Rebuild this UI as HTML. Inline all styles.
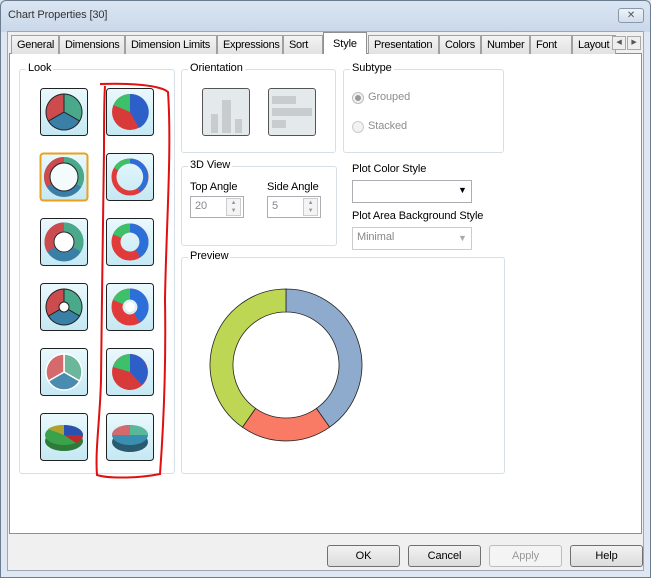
<!DOCTYPE html>
<html><head><style>
*{box-sizing:border-box}
body{margin:0;width:651px;height:578px;overflow:hidden;font-family:"Liberation Sans",sans-serif;font-size:11px;letter-spacing:-0.1px;color:#000;background:#dfe8f2;position:relative}
.a{position:absolute}
.title{left:0;top:0;width:651px;height:32px;background:linear-gradient(#dbe6f3,#c9d8ea);}
.frame{left:0;top:0;width:651px;height:578px;border:1px solid #6d7d90;border-radius:6px 6px 0 0}
.body{left:7px;top:31px;width:637px;height:540px;background:#f0f0f0;border:1px solid #9aa8b8}
.tab{top:35px;height:19px;border:1px solid #a0a0a0;border-bottom:none;background:linear-gradient(#f4f4f4,#e2e2e2);padding:3px 0 0 5px;font-size:11px;letter-spacing:-0.3px;white-space:nowrap;overflow:hidden}
.page{left:9px;top:53px;width:633px;height:481px;background:#fff;border:1px solid #8e8f8f}
.grp{border:1px solid #d5dfe5;border-radius:3px}
.lg{background:#fff;padding:0 2px}
.btn{top:545px;height:22px;border:1px solid #707070;border-radius:3px;background:linear-gradient(#f2f2f2,#dcdcdc);text-align:center;padding-top:4px}
.in{border:1px solid #abadb3;background:#fff;color:#888;padding:3px 0 0 4px}
.gray{color:#8d8d8d}
</style></head><body>
<div class="a title"></div>
<div class="a" style="left:8px;top:9px;color:#333">Chart Properties [30]</div>
<div class="a" style="left:618px;top:8px;width:26px;height:15px;border:1px solid #8797ab;border-radius:3px;background:linear-gradient(#eef3f9,#d3deea);text-align:center;font-size:10px;color:#555;line-height:13px">✕</div>
<div class="a body"></div>
<div class="a page"></div>
<div class="a tab" style="left:11px;width:48px">General</div>
<div class="a tab" style="left:59px;width:66px">Dimensions</div>
<div class="a tab" style="left:125px;width:92px">Dimension Limits</div>
<div class="a tab" style="left:217px;width:66px">Expressions</div>
<div class="a tab" style="left:283px;width:40px">Sort</div>
<div class="a" style="left:323px;top:32px;width:44px;height:22px;border:1px solid #8e8f8f;border-bottom:none;background:#fff;padding:5px 0 0 9px">Style</div>
<div class="a tab" style="left:368px;width:71px">Presentation</div>
<div class="a tab" style="left:439px;width:42px">Colors</div>
<div class="a tab" style="left:481px;width:49px">Number</div>
<div class="a tab" style="left:530px;width:42px">Font</div>
<div class="a tab" style="left:572px;width:44px">Layout</div>
<div class="a" style="left:612px;top:36px;width:14px;height:14px;border:1px solid #aaa;background:#eee;font-size:7px;text-align:center;line-height:12px;color:#555">◀</div>
<div class="a" style="left:627px;top:36px;width:14px;height:14px;border:1px solid #aaa;background:#eee;font-size:7px;text-align:center;line-height:12px;color:#555">▶</div>

<div class="a grp" style="left:19px;top:69px;width:156px;height:405px"></div>
<div class="a lg" style="left:26px;top:62px">Look</div>
<svg class="a" style="left:0;top:0" width="651" height="578">
<defs>
<linearGradient id="ig" x1="0" y1="0" x2="0" y2="1"><stop offset="0" stop-color="#eaf9fd"/><stop offset="1" stop-color="#c4e8f3"/></linearGradient>
<g id="bg"><rect x="0.5" y="0.5" width="47" height="47" rx="3" fill="url(#ig)" stroke="#222"/></g>
</defs>
<g transform="translate(40,88)"><use href="#bg"/>
<path d="M24 24 L24 6 A18 18 0 0 1 39.6 33Z" fill="#4aa98a" stroke="#222"/>
<path d="M24 24 L39.6 33 A18 18 0 0 1 8.4 33Z" fill="#3a7fa6" stroke="#222"/>
<path d="M24 24 L8.4 33 A18 18 0 0 1 24 6Z" fill="#cc4b4e" stroke="#222"/></g>
<g transform="translate(40,153)"><rect x="0.5" y="0.5" width="47" height="47" rx="3" fill="url(#ig)" stroke="#e8a020" stroke-width="2"/>
<circle cx="24" cy="24" r="17" fill="none" stroke="#3a7fa6" stroke-width="6"/>
<path d="M24 7 A17 17 0 0 1 38.7 32.5" fill="none" stroke="#4aa98a" stroke-width="6"/>
<path d="M9.3 32.5 A17 17 0 0 1 24 7" fill="none" stroke="#cc4b4e" stroke-width="6"/>
<circle cx="24" cy="24" r="14" fill="#f4fbfd" stroke="#222"/></g>
<g transform="translate(40,218)"><use href="#bg"/>
<circle cx="24" cy="24" r="15" fill="none" stroke="#3a7fa6" stroke-width="9"/>
<path d="M24 9 A15 15 0 0 1 37 31.5" fill="none" stroke="#4aa98a" stroke-width="9"/>
<path d="M11 31.5 A15 15 0 0 1 24 9" fill="none" stroke="#cc4b4e" stroke-width="9"/>
<circle cx="24" cy="24" r="10" fill="#fff" stroke="#222"/></g>
<g transform="translate(40,283)"><use href="#bg"/>
<path d="M24 24 L24 6 A18 18 0 0 1 39.6 33Z" fill="#4aa98a" stroke="#222"/>
<path d="M24 24 L39.6 33 A18 18 0 0 1 8.4 33Z" fill="#3a7fa6" stroke="#222"/>
<path d="M24 24 L8.4 33 A18 18 0 0 1 24 6Z" fill="#cc4b4e" stroke="#222"/>
<circle cx="24" cy="24" r="5" fill="#fff" stroke="#222"/></g>
<g transform="translate(40,348)"><use href="#bg"/>
<path d="M24 24 L24 6 A18 18 0 0 1 39.6 33Z" fill="#6cb79c" stroke="#fff" stroke-width="1.5"/>
<path d="M24 24 L39.6 33 A18 18 0 0 1 8.4 33Z" fill="#4a8bb0" stroke="#fff" stroke-width="1.5"/>
<path d="M24 24 L8.4 33 A18 18 0 0 1 24 6Z" fill="#d46a6c" stroke="#fff" stroke-width="1.5"/></g>
<g transform="translate(40,413)"><use href="#bg"/>
<ellipse cx="24" cy="28" rx="19" ry="10" fill="#2d7a3a"/>
<ellipse cx="24" cy="22" rx="19" ry="10" fill="#3aa24a"/>
<path d="M24 22 L24 12 A19 10 0 0 1 43 22Z" fill="#2a50b0"/>
<path d="M24 22 L43 22 A19 10 0 0 1 36 30Z" fill="#c02a2a"/>
<path d="M24 22 L8 16 A19 10 0 0 1 24 12Z" fill="#b0a030"/></g>
<g transform="translate(106,88)"><use href="#bg"/>
<circle cx="24" cy="24" r="18" fill="#d83a3a"/>
<path d="M24 24 L24 6 A18 18 0 0 1 33 40Z" fill="#2d5fc8"/>
<path d="M24 24 L24 6 A18 18 0 0 0 7.5 17Z" fill="#3cc06a"/></g>
<g transform="translate(106,153)"><use href="#bg"/>
<circle cx="24" cy="24" r="16" fill="none" stroke="#e03a3a" stroke-width="5"/>
<path d="M24 8 A16 16 0 0 1 33 37" fill="none" stroke="#2d6fd8" stroke-width="5"/>
<path d="M10 16 A16 16 0 0 1 24 8" fill="none" stroke="#3cc06a" stroke-width="5"/></g>
<g transform="translate(106,218)"><use href="#bg"/>
<circle cx="24" cy="24" r="14" fill="none" stroke="#e03a3a" stroke-width="9"/>
<path d="M24 10 A14 14 0 0 1 32 35.5" fill="none" stroke="#2d6fd8" stroke-width="9"/>
<path d="M11 18 A14 14 0 0 1 24 10" fill="none" stroke="#3cc06a" stroke-width="9"/></g>
<g transform="translate(106,283)"><use href="#bg"/>
<circle cx="24" cy="24" r="13" fill="none" stroke="#e03a3a" stroke-width="11"/>
<path d="M24 11 A13 13 0 0 1 31 35" fill="none" stroke="#2d6fd8" stroke-width="11"/>
<path d="M12 19 A13 13 0 0 1 24 11" fill="none" stroke="#3cc06a" stroke-width="11"/>
<circle cx="24" cy="24" r="5" fill="#fff"/></g>
<g transform="translate(106,348)"><use href="#bg"/>
<circle cx="24" cy="24" r="18" fill="#d83a3a"/>
<path d="M24 24 L24 6 A18 18 0 0 1 36 37Z" fill="#2d5fc8"/>
<path d="M24 24 L24 6 A18 18 0 0 0 7 19Z" fill="#3cc06a"/></g>
<g transform="translate(106,413)"><use href="#bg"/>
<ellipse cx="24" cy="29" rx="18" ry="10" fill="#2a5a70"/>
<ellipse cx="24" cy="22" rx="18" ry="10" fill="#3a8fb0"/>
<path d="M24 22 L24 12 A18 10 0 0 1 42 22Z" fill="#5ab89a"/>
<path d="M24 22 L6 22 A18 10 0 0 1 24 12Z" fill="#d46a6c"/></g>
<path d="M100 84 C130 83 160 85 168 92 C172 150 166 230 165 300 C166 360 164 420 160 474 C140 478 110 479 97 475 C95 450 100 420 101 380 C102 300 103 200 104 150 C104 120 104 100 105 86" fill="none" stroke="#e01010" stroke-width="2"/>
</svg>

<div class="a grp" style="left:181px;top:69px;width:155px;height:84px"></div>
<div class="a lg" style="left:188px;top:62px">Orientation</div>
<div class="a" style="left:202px;top:88px;width:48px;height:48px;border:1px solid #555;border-radius:3px;background:#e4eaec">
<div class="a" style="left:8px;top:25px;width:7px;height:19px;background:#c8cccc"></div><div class="a" style="left:19px;top:11px;width:9px;height:33px;background:#c8cccc"></div><div class="a" style="left:32px;top:30px;width:7px;height:14px;background:#c8cccc"></div></div>
<div class="a" style="left:268px;top:88px;width:48px;height:48px;border:1px solid #555;border-radius:3px;background:#e4eaec">
<div class="a" style="left:3px;top:7px;width:24px;height:8px;background:#c8cccc"></div><div class="a" style="left:3px;top:19px;width:40px;height:8px;background:#c8cccc"></div><div class="a" style="left:3px;top:31px;width:14px;height:8px;background:#c8cccc"></div></div>

<div class="a grp" style="left:343px;top:69px;width:161px;height:84px"></div>
<div class="a lg" style="left:350px;top:62px">Subtype</div>
<div class="a" style="left:352px;top:92px;width:12px;height:12px;border:1px solid #bbb;border-radius:50%;background:#f2f2f2"><div class="a" style="left:2px;top:2px;width:6px;height:6px;border-radius:50%;background:#999"></div></div>
<div class="a gray" style="left:368px;top:91px">Grouped</div>
<div class="a" style="left:352px;top:121px;width:12px;height:12px;border:1px solid #ccc;border-radius:50%;background:#f2f2f2"></div>
<div class="a gray" style="left:368px;top:120px">Stacked</div>

<div class="a grp" style="left:181px;top:166px;width:156px;height:80px"></div>
<div class="a lg" style="left:188px;top:159px">3D View</div>
<div class="a" style="left:190px;top:181px">Top Angle</div>
<div class="a" style="left:267px;top:181px">Side Angle</div>
<div class="a in" style="left:190px;top:196px;width:54px;height:22px">20</div>
<div class="a" style="left:226px;top:198px;width:15px;height:18px;border:1px solid #ccc;background:#f4f4f4;font-size:6px;color:#999;text-align:center;line-height:8px">▲<br>▼</div>
<div class="a in" style="left:267px;top:196px;width:54px;height:22px">5</div>
<div class="a" style="left:303px;top:198px;width:15px;height:18px;border:1px solid #ccc;background:#f4f4f4;font-size:6px;color:#999;text-align:center;line-height:8px">▲<br>▼</div>

<div class="a" style="left:352px;top:163px">Plot Color Style</div>
<div class="a in" style="left:352px;top:180px;width:120px;height:23px"></div>
<div class="a" style="left:458px;top:185px;font-size:9px">▼</div>
<div class="a" style="left:352px;top:210px">Plot Area Background Style</div>
<div class="a in" style="left:352px;top:227px;width:120px;height:23px;border-color:#ccc">Minimal</div>
<div class="a" style="left:458px;top:233px;font-size:9px;color:#aaa">▼</div>

<div class="a grp" style="left:181px;top:257px;width:324px;height:217px"></div>
<div class="a lg" style="left:188px;top:250px">Preview</div>
<svg class="a" style="left:0;top:0" width="651" height="578">
<path d="M286 289 A76 76 0 0 1 329.6 427.2 L316.4 408.4 A53 53 0 0 0 286 312 Z" fill="#8eaacc" stroke="#222" stroke-width="0.8"/>
<path d="M329.6 427.2 A76 76 0 0 1 242.4 427.2 L255.6 408.4 A53 53 0 0 0 316.4 408.4 Z" fill="#f97b66" stroke="#222" stroke-width="0.8"/>
<path d="M242.4 427.2 A76 76 0 0 1 286 289 L286 312 A53 53 0 0 0 255.6 408.4 Z" fill="#bdd653" stroke="#222" stroke-width="0.8"/>
</svg>

<div class="a btn" style="left:327px;width:73px">OK</div>
<div class="a btn" style="left:408px;width:73px">Cancel</div>
<div class="a btn" style="left:489px;width:73px;border-color:#bbb;background:#f4f4f4;color:#999">Apply</div>
<div class="a btn" style="left:570px;width:73px">Help</div>
<div class="a frame"></div>
</body></html>
